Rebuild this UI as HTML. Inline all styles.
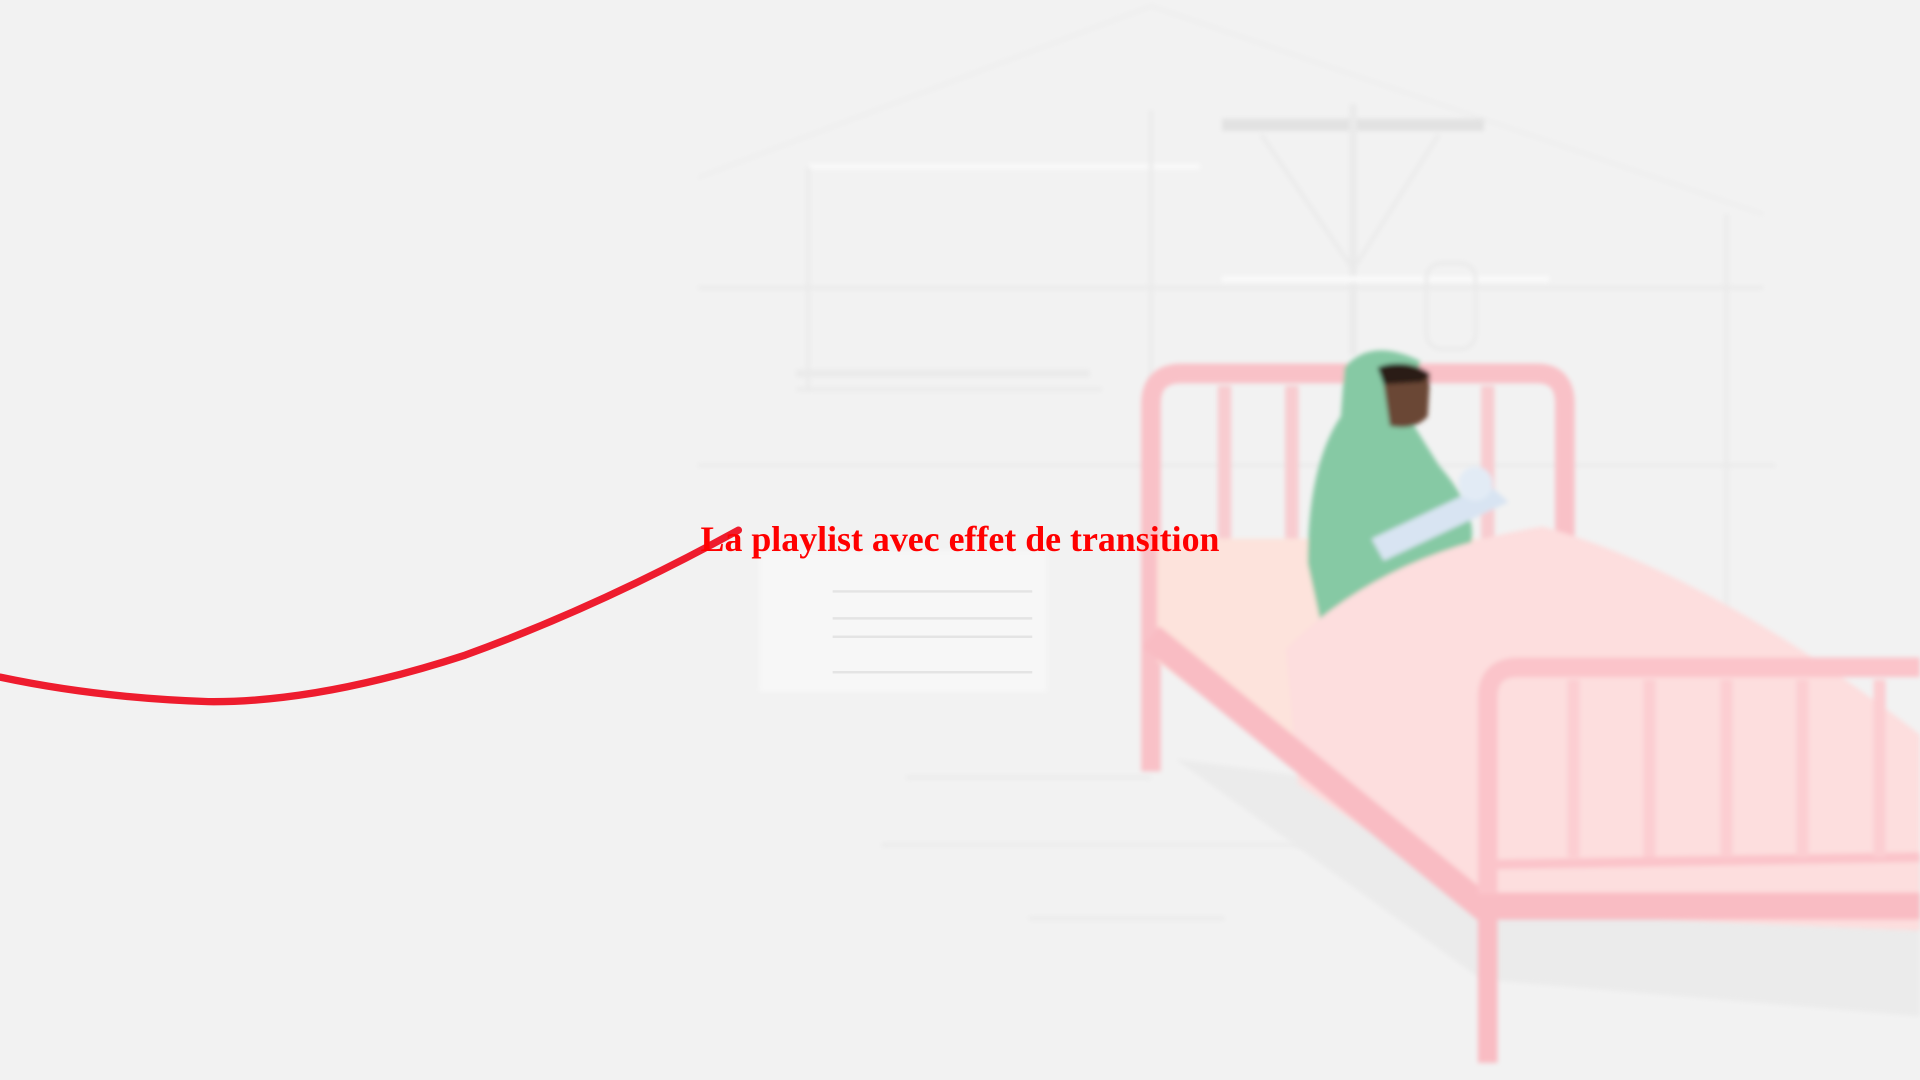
<!DOCTYPE html>
<html><head><meta charset="utf-8"><style>
html,body{margin:0;padding:0;width:1920px;height:1080px;overflow:hidden;background:#f2f2f2}
svg{display:block}
</style></head><body>
<svg width="1920" height="1080" viewBox="0 0 1568 882" xmlns="http://www.w3.org/2000/svg">
<defs><filter id="b" x="-10%" y="-10%" width="120%" height="120%"><feGaussianBlur stdDeviation="2"/></filter></defs>
<rect width="1568" height="882" fill="#f2f2f2"/>
<g stroke="#eaeaea" stroke-width="3" fill="none" filter="url(#b)">
<path d="M570 145 L940 5 L1440 175" stroke="#eeeeee"/>
<line x1="660" y1="136" x2="980" y2="136" stroke="#fafafa" stroke-width="4"/>
<line x1="660" y1="136" x2="660" y2="320"/>
<line x1="940" y1="90" x2="940" y2="420"/>
<line x1="998" y1="102" x2="1212" y2="102" stroke="#e2e2e2" stroke-width="10"/>
<path d="M1030 110 L1105 220 L1175 110"/><line x1="1105" y1="85" x2="1105" y2="290" stroke-width="6"/>
<line x1="998" y1="228" x2="1265" y2="228" stroke="#fafafa" stroke-width="5"/>
<rect x="1165" y="215" width="40" height="70" rx="12"/>
<line x1="570" y1="235" x2="1440" y2="235"/>
<line x1="570" y1="380" x2="1450" y2="380"/>
<line x1="650" y1="305" x2="890" y2="305" stroke-width="6"/>
<line x1="650" y1="318" x2="900" y2="318"/>
<line x1="1410" y1="175" x2="1410" y2="500"/>
<line x1="720" y1="690" x2="1100" y2="690"/>
<line x1="740" y1="635" x2="940" y2="635"/>
<line x1="840" y1="750" x2="1000" y2="750"/>
</g>
<rect x="620" y="450" width="235" height="115" fill="#f7f7f7" filter="url(#b)"/>
<g stroke="#e4e4e4" stroke-width="2"><line x1="680" y1="483" x2="843" y2="483"/><line x1="680" y1="505" x2="843" y2="505"/><line x1="680" y1="520" x2="843" y2="520"/><line x1="680" y1="549" x2="843" y2="549"/></g>
<path d="M960 620 L1210 800 L1568 830 L1568 700 Z" fill="#ebebeb" filter="url(#b)"/>
<g filter="url(#b)">
<path d="M940 630 L940 330 Q940 305 965 305 L1255 305 Q1278 305 1278 330 L1278 440" stroke="#f9c1c7" stroke-width="16" fill="none"/>
<g stroke="#f8ccd0" stroke-width="11"><line x1="1000" y1="315" x2="1000" y2="440"/><line x1="1055" y1="315" x2="1055" y2="440"/><line x1="1215" y1="315" x2="1215" y2="440"/></g>
<path d="M945 440 L1270 440 L1568 620 L1568 760 L1215 745 L945 540 Z" fill="#fde3dc"/>
<path d="M1098 300 Q1120 275 1160 295 L1150 340 L1175 380 Q1210 420 1200 450 L1110 510 L1080 515 L1068 460 Q1068 380 1095 340 Z" fill="#86c9a4"/>
<path d="M1128 300 Q1150 292 1168 305 L1166 340 Q1155 352 1135 348 Z" fill="#6a4636"/>
<path d="M1125 300 Q1145 292 1168 305 L1162 312 L1130 314 Z" fill="#2a1d18"/>
<path d="M1120 440 L1215 395 L1232 410 L1130 458 Z" fill="#d8e4f2"/>
<circle cx="1205" cy="395" r="14" fill="#e2ebf5"/>
<path d="M1050 530 Q1130 450 1260 430 Q1400 470 1568 600 L1568 760 L1215 745 L1060 640 Z" fill="#fddede"/>
<path d="M940 520 L1210 740 L1568 740" stroke="#f9bcc3" stroke-width="22" fill="none"/>
<line x1="1215" y1="740" x2="1215" y2="868" stroke="#f9bcc3" stroke-width="16"/>
<path d="M1215 730 L1215 570 Q1215 545 1240 545 L1568 545" stroke="#fbc4ca" stroke-width="16" fill="none"/>
<line x1="1220" y1="706" x2="1568" y2="700" stroke="#fbc4ca" stroke-width="8"/>
<g stroke="#fcced2" stroke-width="10"><line x1="1285" y1="555" x2="1285" y2="700"/><line x1="1347" y1="555" x2="1347" y2="700"/><line x1="1410" y1="555" x2="1410" y2="700"/><line x1="1472" y1="555" x2="1472" y2="700"/><line x1="1535" y1="555" x2="1535" y2="700"/></g>
</g>
<path d="M0 553 Q80 570 170 573 Q260 574 380 535 Q490 495 603 433" stroke="#ee1c2e" stroke-width="6" fill="none" stroke-linecap="round"/>
<text x="784" y="450" text-anchor="middle" font-family="Liberation Serif, serif" font-weight="bold" font-size="29.3" fill="#ff0000">La playlist avec effet de transition</text>
</svg>
</body></html>
